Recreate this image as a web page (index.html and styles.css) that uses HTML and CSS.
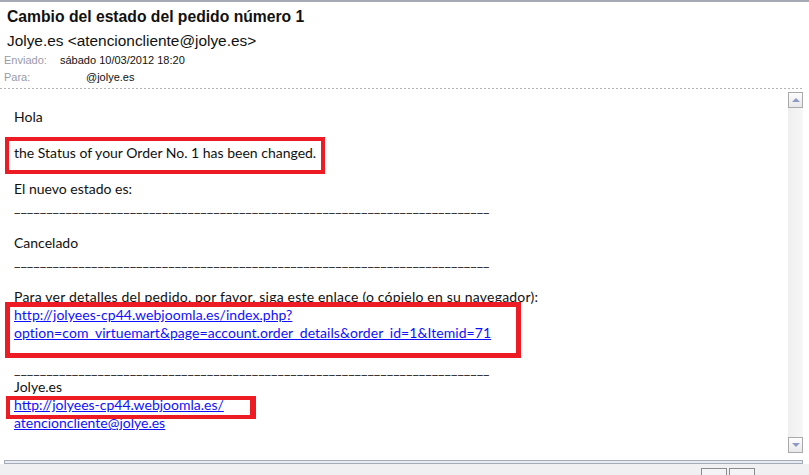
FILE: index.html
```html
<!DOCTYPE html>
<html lang="es">
<head>
  <meta charset="UTF-8" />
  <title>Cambio del estado del pedido número 1</title>
  <link rel="stylesheet" href="styles.css">
</head>
<body>

  <div class="window">
    <!-- Message header -->
    <div class="head">
      <div class="subject">Cambio del estado del pedido número 1</div>
      <div class="from">Jolye.es &lt;atencioncliente@jolye.es&gt;</div>
      <div class="meta">
        <span class="meta-label">Enviado:</span>
        <span class="meta-value">sábado 10/03/2012 18:20</span>
      </div>
      <div class="meta">
        <span class="meta-label">Para:</span>
        <span class="meta-value to">@jolye.es</span>
      </div>
    </div>
    <div class="dashed"></div>

    <!-- Message body -->
    <div class="content">
      <div class="message">
        <p>Hola</p>
        <p class="marked">the Status of your Order No. 1 has been changed.<span class="mark mark-status"></span></p>
        <p>El nuevo estado es:<br>__________________________________________________________________________</p>
        <p>Cancelado<br>__________________________________________________________________________</p>
        <p class="marked wide">Para ver detalles del pedido, por favor, siga este enlace (o cópielo en su navegador):<br>
          <a href="#">http://jolyees-cp44.webjoomla.es/index.php?<br>option=com_virtuemart&amp;page=account.order_details&amp;order_id=1&amp;Itemid=71</a>
          <span class="mark mark-link"></span>
        </p>
        <p class="marked">__________________________________________________________________________<br>Jolye.es<br>
          <a href="#">http://jolyees-cp44.webjoomla.es/</a><br>
          <a href="#">atencioncliente@jolye.es</a>
          <span class="mark mark-site"></span>
        </p>
      </div>
      <div class="scrollbar">
        <div class="sb-btn sb-up"></div>
        <div class="sb-track"></div>
        <div class="sb-btn sb-down"></div>
      </div>
    </div>

    <!-- Bottom frame -->
    <div class="foot">
      <div class="foot-bar"></div>
      <div class="foot-panel">
        <span class="foot-btn"></span>
        <span class="foot-btn"></span>
      </div>
    </div>
  </div>

</body>
</html>
```

FILE: styles.css
```css
* {
  box-sizing: border-box;
}

body {
  margin: 0;
  background: #ffffff;
  font-family: "Liberation Sans", Arial, sans-serif;
  color: #111111;
}

.window {
  width: 809px;
  height: 475px;
  display: grid;
  grid-template-rows: auto auto 1fr auto;
  border-top: 2px solid #a5aab5;
  overflow: hidden;
}

.head {
  padding: 4px 0 0 7px;
}

.subject {
  font-size: 15.7px;
  font-weight: bold;
  line-height: 22px;
  margin-bottom: 2px;
}

.from {
  font-size: 15.4px;
  line-height: 22px;
}

.meta {
  display: flex;
  font-size: 11px;
  line-height: 17px;
  margin-left: -3px;
}

.meta-label {
  width: 56px;
  color: #9a9aa8;
}

.meta-value {
  color: #111111;
}

.meta-value.to {
  margin-left: 26px;
}

.dashed {
  height: 1px;
  width: 803px;
  margin-top: 2px;
  background: repeating-linear-gradient(to right, #b4b4b4 0 2px, transparent 2px 4px);
}

.content {
  display: flex;
  min-height: 0;
}

.message {
  flex: 1;
  padding: 19px 0 0 14px;
  font-family: Lato, "Liberation Sans", sans-serif;
  font-size: 14px;
  line-height: 18px;
}

.message p {
  margin: 0 0 18px;
}

.message p.wide {
  letter-spacing: 0.2px;
}

.message p.wide a {
  letter-spacing: 0.05px;
}

.marked {
  position: relative;
}

a {
  color: #1010ff;
}

/* red annotation frames drawn over the text */
.mark {
  position: absolute;
  left: -9px;
  border: 4px solid #ed1c24;
}

.mark-status {
  top: -7px;
  width: 320px;
  height: 37px;
}

.mark-link {
  top: 14px;
  width: 516px;
  height: 56px;
  border-width: 5px;
}

.mark-site {
  top: 36px;
  left: -8px;
  width: 250px;
  height: 23px;
  border-right-width: 6px;
}

.scrollbar {
  width: 15px;
  height: 361px;
  margin: 3px 6px 0 0;
  display: flex;
  flex-direction: column;
  background: linear-gradient(to right, #eeeeee, #f7f7f7);
}

.sb-btn {
  height: 16px;
  border: 1px solid #a9a9a9;
  background: linear-gradient(#fdfdfd, #e8e8ea);
  display: flex;
  align-items: center;
  justify-content: center;
}

.sb-btn::after {
  content: "";
  border-left: 4px solid transparent;
  border-right: 4px solid transparent;
}

.sb-up::after {
  border-bottom: 4px solid #8e9ac4;
}

.sb-down::after {
  border-top: 4px solid #8e9ac4;
}

.sb-track {
  flex: 1;
}

.foot {
  height: 15px;
}

.foot-bar {
  height: 4px;
  margin: 0 6px 0 4px;
  border: 1px solid #a6abb8;
  background: #e8ebf2;
}

.foot-panel {
  height: 11px;
  background: #f0f0f2;
  display: flex;
  gap: 2px;
  padding: 4px 0 0 701px;
}

.foot-btn {
  width: 26px;
  height: 12px;
  border: 1px solid #8c8c8c;
  border-bottom: none;
  background: #f4f4f6;
}
```
